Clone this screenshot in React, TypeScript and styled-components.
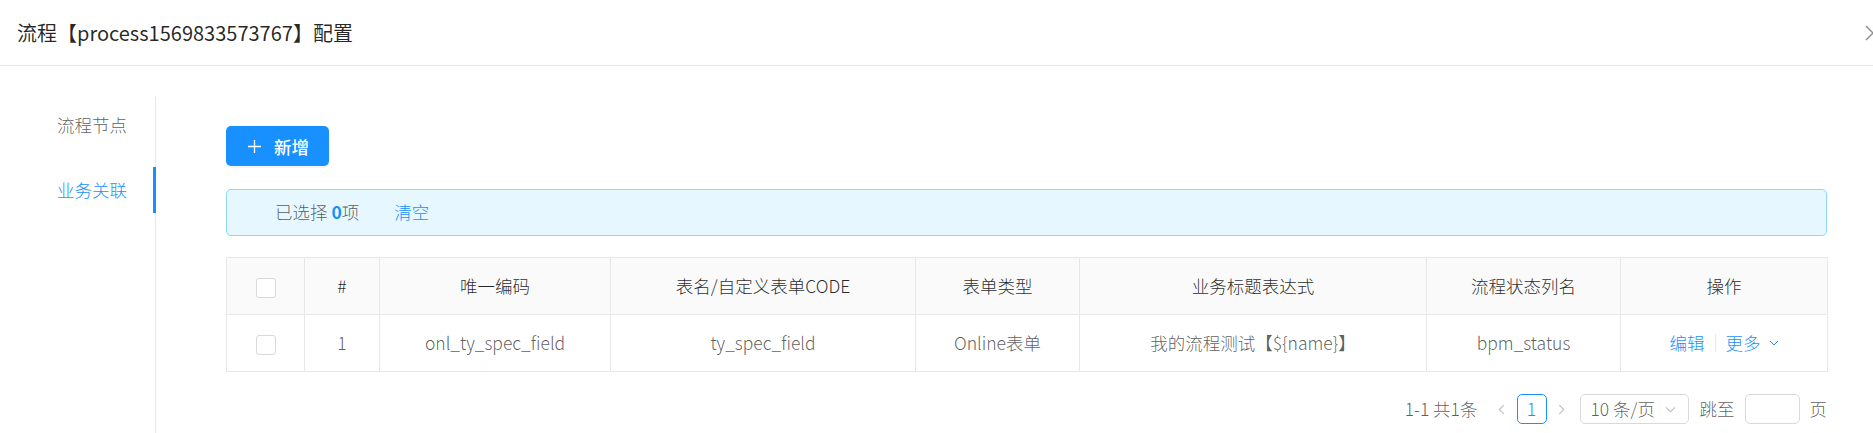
import React from 'react';
import styled, { createGlobalStyle } from 'styled-components';

const GlobalStyle = createGlobalStyle`
  html, body {
    margin: 0;
    padding: 0;
    background: #fff;
  }
  body {
    font-family: "Noto Sans CJK SC", "Noto Sans", sans-serif;
    font-size: 17.5px;
    font-weight: 300;
    line-height: 1.5;
    color: rgba(0, 0, 0, 0.65);
  }
  * {
    box-sizing: border-box;
  }
`;

const PRIMARY = '#1890ff';
const BORDER = '#e8e8e8';

const Page = styled.div`
  display: flex;
  flex-direction: column;
  min-height: 100vh;
  overflow: hidden;
`;

const Header = styled.div`
  display: flex;
  align-items: center;
  justify-content: space-between;
  height: 66px;
  padding-left: 17px;
  border-bottom: 1px solid ${BORDER};
`;

const Title = styled.div`
  font-size: 20px;
  font-weight: 400;
  color: rgba(0, 0, 0, 0.85);
  line-height: 30px;
`;

const CloseButton = styled.span`
  display: flex;
  width: 16px;
  height: 16px;
  margin-right: -8px;
  color: rgba(0, 0, 0, 0.45);
`;

const Body = styled.div`
  flex: 1;
  display: flex;
  padding-top: 31px;
`;

const SideNav = styled.div`
  width: 156px;
  flex-shrink: 0;
  display: flex;
  flex-direction: column;
  gap: 19px;
  padding-top: 5px;
  border-right: 1px solid ${BORDER};
`;

const NavTab = styled.div<{ $active?: boolean }>`
  position: relative;
  height: 46px;
  line-height: 46px;
  padding-right: 28px;
  text-align: right;
  color: ${({ $active }) => ($active ? PRIMARY : 'rgba(0, 0, 0, 0.65)')};

  &::after {
    content: '';
    display: ${({ $active }) => ($active ? 'block' : 'none')};
    position: absolute;
    top: 0;
    right: -1px;
    width: 3px;
    height: 100%;
    background: ${PRIMARY};
  }
`;

const Content = styled.div`
  flex: 1;
  min-width: 0;
  padding: 29px 46px 0 70px;
`;

const PrimaryButton = styled.button`
  display: inline-flex;
  align-items: center;
  gap: 13px;
  height: 40px;
  padding: 0 20px 0 22px;
  border: none;
  border-radius: 5px;
  background: ${PRIMARY};
  color: #fff;
  font-family: inherit;
  font-size: 17.5px;
  font-weight: 500;
  box-shadow: 0 2px 0 rgba(0, 0, 0, 0.045);
  cursor: pointer;
`;

const Toolbar = styled.div`
  margin-bottom: 23px;
`;

const Alert = styled.div`
  display: flex;
  align-items: center;
  height: 47px;
  padding-left: 48px;
  margin-bottom: 21px;
  border: 1px solid #91d5ff;
  border-radius: 5px;
  background: #e6f7ff;
`;

const Count = styled.b`
  color: ${PRIMARY};
  font-weight: 600;
  margin-left: 4px;
`;

const Link = styled.a`
  color: ${PRIMARY};
  cursor: pointer;
`;

const ClearLink = styled(Link)`
  margin-left: 35px;
`;

const Table = styled.table`
  width: 100%;
  table-layout: fixed;
  border-collapse: separate;
  border-spacing: 0;
  border-top: 1px solid ${BORDER};
  border-left: 1px solid ${BORDER};
`;

const Col = styled.col<{ $w: number }>`
  width: ${({ $w }) => $w}px;
`;

const Th = styled.th`
  padding: 15px 8px;
  line-height: 26px;
  background: #fafafa;
  color: rgba(0, 0, 0, 0.85);
  font-weight: 300;
  text-align: center;
  border-right: 1px solid ${BORDER};
  border-bottom: 1px solid ${BORDER};
  white-space: nowrap;
`;

const Td = styled.td`
  padding: 15px 8px;
  line-height: 26px;
  text-align: center;
  border-right: 1px solid ${BORDER};
  border-bottom: 1px solid ${BORDER};
  white-space: nowrap;
`;

const Checkbox = styled.span`
  display: inline-block;
  width: 20px;
  height: 20px;
  vertical-align: middle;
  border: 1px solid #d9d9d9;
  border-radius: 3px;
  background: #fff;
`;

const Actions = styled.span`
  display: inline-flex;
  align-items: center;
`;

const Divider = styled.span`
  display: inline-block;
  width: 1px;
  height: 18px;
  margin: 0 10px;
  background: ${BORDER};
`;

const MoreLink = styled(Link)`
  display: inline-flex;
  align-items: center;
  gap: 8px;
`;

const Pagination = styled.div`
  display: flex;
  justify-content: flex-end;
  align-items: center;
  margin-top: 22px;
  height: 30px;
  line-height: 30px;
`;

const Total = styled.span`
  margin-right: 9px;
`;

const PageArrow = styled.span`
  display: inline-flex;
  align-items: center;
  justify-content: center;
  width: 30px;
  height: 30px;
  color: rgba(0, 0, 0, 0.25);
`;

const PageItem = styled.span<{ $active?: boolean }>`
  display: inline-flex;
  align-items: center;
  justify-content: center;
  width: 30px;
  height: 30px;
  border: 1px solid ${({ $active }) => ($active ? PRIMARY : 'transparent')};
  border-radius: 5px;
  color: ${({ $active }) => ($active ? PRIMARY : 'rgba(0, 0, 0, 0.65)')};
`;

const SizeSelect = styled.span`
  display: inline-flex;
  align-items: center;
  justify-content: space-between;
  width: 109px;
  height: 30px;
  margin-left: 3px;
  padding: 0 12px 0 10px;
  border: 1px solid #d9d9d9;
  border-radius: 5px;
  color: rgba(0, 0, 0, 0.65);
`;

const SelectArrow = styled.span`
  display: inline-flex;
  color: rgba(0, 0, 0, 0.25);
`;

const JumpLabel = styled.span`
  margin-left: 11px;
`;

const JumpInput = styled.span`
  display: inline-block;
  width: 55px;
  height: 30px;
  margin: 0 10px;
  border: 1px solid #d9d9d9;
  border-radius: 5px;
  background: #fff;
`;

const Chevron = ({ dir, size = 10 }: { dir: 'left' | 'right' | 'down'; size?: number }) => {
  const points =
    dir === 'left' ? '7,1 3,5 7,9' : dir === 'right' ? '3,1 7,5 3,9' : '1,3 5,7 9,3';
  return (
    <svg width={size} height={size} viewBox="0 0 10 10" fill="none">
      <polyline points={points} stroke="currentColor" strokeWidth="1" />
    </svg>
  );
};

const columns = [
  { key: 'check', title: '', width: 78 },
  { key: 'index', title: '#', width: 75 },
  { key: 'code', title: '唯一编码', width: 231 },
  { key: 'table', title: '表名/自定义表单CODE', width: 305 },
  { key: 'type', title: '表单类型', width: 164 },
  { key: 'expr', title: '业务标题表达式', width: 347 },
  { key: 'status', title: '流程状态列名', width: 194 },
  { key: 'action', title: '操作', width: 207 },
];

const rows = [
  {
    id: 1,
    code: 'onl_ty_spec_field',
    table: 'ty_spec_field',
    type: 'Online表单',
    expr: '我的流程测试【${name}】',
    status: 'bpm_status',
  },
];

export default function App() {
  return (
    <Page>
      <GlobalStyle />
      <Header>
        <Title>流程【process1569833573767】配置</Title>
        <CloseButton>
          <svg width="16" height="16" viewBox="0 0 16 16" fill="none">
            <path d="M1 1 L15 15 M15 1 L1 15" stroke="currentColor" strokeWidth="1.4" />
          </svg>
        </CloseButton>
      </Header>
      <Body>
        <SideNav>
          <NavTab>流程节点</NavTab>
          <NavTab $active>业务关联</NavTab>
        </SideNav>
        <Content>
          <Toolbar>
            <PrimaryButton>
              <svg width="13" height="13" viewBox="0 0 13 13" fill="none">
                <path d="M6.5 0 V13 M0 6.5 H13" stroke="#fff" strokeWidth="1.3" />
              </svg>
              新增
            </PrimaryButton>
          </Toolbar>
          <Alert>
            已选择<Count>0</Count>项
            <ClearLink>清空</ClearLink>
          </Alert>
          <Table>
            <colgroup>
              {columns.map((c) => (
                <Col key={c.key} $w={c.width} />
              ))}
            </colgroup>
            <thead>
              <tr>
                {columns.map((c) => (
                  <Th key={c.key}>{c.key === 'check' ? <Checkbox /> : c.title}</Th>
                ))}
              </tr>
            </thead>
            <tbody>
              {rows.map((r) => (
                <tr key={r.id}>
                  <Td>
                    <Checkbox />
                  </Td>
                  <Td>{r.id}</Td>
                  <Td>{r.code}</Td>
                  <Td>{r.table}</Td>
                  <Td>{r.type}</Td>
                  <Td>{r.expr}</Td>
                  <Td>{r.status}</Td>
                  <Td>
                    <Actions>
                      <Link>编辑</Link>
                      <Divider />
                      <MoreLink>
                        更多
                        <Chevron dir="down" size={10} />
                      </MoreLink>
                    </Actions>
                  </Td>
                </tr>
              ))}
            </tbody>
          </Table>
          <Pagination>
            <Total>1-1 共1条</Total>
            <PageArrow>
              <Chevron dir="left" size={11} />
            </PageArrow>
            <PageItem $active>1</PageItem>
            <PageArrow>
              <Chevron dir="right" size={11} />
            </PageArrow>
            <SizeSelect>
              10 条/页
              <SelectArrow>
                <Chevron dir="down" size={11} />
              </SelectArrow>
            </SizeSelect>
            <JumpLabel>跳至</JumpLabel>
            <JumpInput />
            页
          </Pagination>
        </Content>
      </Body>
    </Page>
  );
}
